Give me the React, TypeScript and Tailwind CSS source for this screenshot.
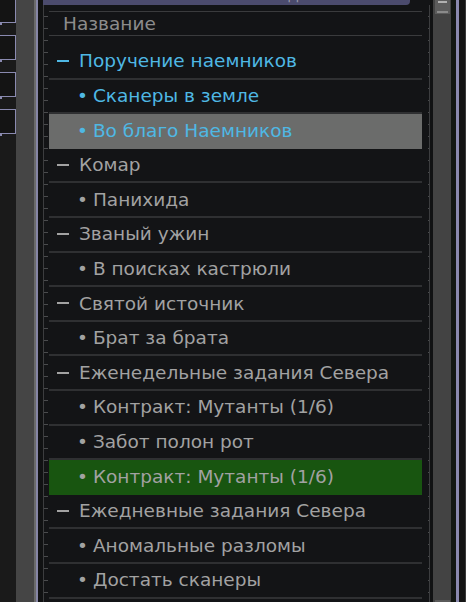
import React from "react";

type Row = { text: string; kind: "group" | "item"; color: "blue" | "gray"; hl?: "gray" | "green" };

const rows: Row[] = [
  { text: "Поручение наемников", kind: "group", color: "blue" },
  { text: "Сканеры в земле", kind: "item", color: "blue" },
  { text: "Во благо Наемников", kind: "item", color: "blue", hl: "gray" },
  { text: "Комар", kind: "group", color: "gray" },
  { text: "Панихида", kind: "item", color: "gray" },
  { text: "Званый ужин", kind: "group", color: "gray" },
  { text: "В поисках кастрюли", kind: "item", color: "gray" },
  { text: "Святой источник", kind: "group", color: "gray" },
  { text: "Брат за брата", kind: "item", color: "gray" },
  { text: "Еженедельные задания Севера", kind: "group", color: "gray" },
  { text: "Контракт: Мутанты (1/6)", kind: "item", color: "gray" },
  { text: "Забот полон рот", kind: "item", color: "gray" },
  { text: "Контракт: Мутанты (1/6)", kind: "item", color: "gray", hl: "green" },
  { text: "Ежедневные задания Севера", kind: "group", color: "gray" },
  { text: "Аномальные разломы", kind: "item", color: "gray" },
  { text: "Достать сканеры", kind: "item", color: "gray" },
];

export default function App() {
  return (
    <div className="w-[466px] h-[602px] overflow-hidden flex bg-[#131416] font-['DejaVu_Sans',sans-serif]">
      {/* левые кнопки */}
      <div className="w-[16px] shrink-0 bg-[#1a1a1a] flex flex-col gap-[12px] -mt-[2px]">
        {[0, 1, 2, 3].map((i) => (
          <div key={i} className="relative h-[25px] bg-[#141414] border-y border-r border-[#8a8ab0]">
            <div className="absolute left-0 -bottom-[3px] w-[2px] h-[2px] bg-[#8a8ab0]" />
          </div>
        ))}
      </div>
      <div className="w-[18px] shrink-0 bg-[#454545]" />
      <div className="w-[2px] shrink-0 bg-[#6a6a6a]" />
      <div className="w-[2px] shrink-0 bg-[#8686a6]" />
      <div className="w-[5px] shrink-0 bg-[#111213]" />

      {/* основная колонка */}
      <div className="w-[387px] shrink-0 flex flex-col">
        <div className="h-[5px] w-[367px] bg-[#4b4b6d] rounded-br-[4px] overflow-hidden flex gap-[14px] pl-[8px] text-[16px] leading-[18px]">
          <span className="-mt-[14px] text-[#2fa82f]">активные</span>
          <span className="-mt-[14px] text-[#9a9aa8]">Выполненные задания</span>
        </div>
        <div className="flex flex-1">
          <div className="w-[6px] shrink-0 border-l border-[#3c3d3f] bg-[repeating-linear-gradient(to_bottom,transparent_0px,transparent_11px,#4a4b4d_11px,#4a4b4d_12px)] bg-[length:4px_100%] bg-no-repeat" />
          <div className="w-[373px] shrink-0 pt-[6px]">
            <div className="h-[25px] border-y border-[#3a3b3d] flex items-center pl-[14px] text-[18.5px] text-[#8c8c8c]">
              Название
            </div>
            <div className="h-[9px]" />
            {rows.map((r, i) => (
              <div
                key={i}
                className={
                  "h-[34.6px] flex items-center text-[18.5px] whitespace-nowrap border-b-2 " +
                  (r.hl === "gray"
                    ? "bg-[#6b6c6b] border-[#6b6c6b] "
                    : r.hl === "green"
                    ? "bg-[#185510] border-[#185510] "
                    : "border-[#2f3032] ") +
                  (r.color === "blue" ? "text-[#4fb8e4] " : "text-[#a2a2a2] ") +
                  (r.kind === "group" ? "pl-[8px]" : "pl-[28px]")
                }
              >
                {r.kind === "group" ? (
                  <span className="inline-block w-[12px] h-[2px] mr-[10px] bg-current" />
                ) : (
                  <span className="mr-[5px]">•</span>
                )}
                {r.text}
              </div>
            ))}
          </div>
          <div className="w-[6px] shrink-0" />
          <div className="w-[2px] shrink-0 border-r border-[#3c3d3f] bg-[repeating-linear-gradient(to_bottom,transparent_0px,transparent_11px,#4a4b4d_11px,#4a4b4d_12px)]" />
        </div>
      </div>

      {/* полоса прокрутки */}
      <div className="w-[3px] shrink-0 bg-[#111213]" />
      <div className="w-[18px] shrink-0 bg-[#434343] flex flex-col items-center justify-between">
        <div className="w-[15px] h-[14px] bg-[#5c5c5c] flex flex-col items-center justify-between py-[1px]">
          <div className="w-[9px] h-[2px] bg-[#b0b0b0]" />
          <div className="w-[11px] h-[2px] bg-[#8a8a8a]" />
        </div>
        <div className="w-[15px] h-[2px] bg-[#5a5a5a]" />
      </div>
      <div className="w-[5px] shrink-0 bg-[#131813]" />
      <div className="w-[3px] shrink-0 bg-[#8a8aae]" />
      <div className="flex-1 bg-[#141414] border-r border-[#3a3a3a]" />
    </div>
  );
}
